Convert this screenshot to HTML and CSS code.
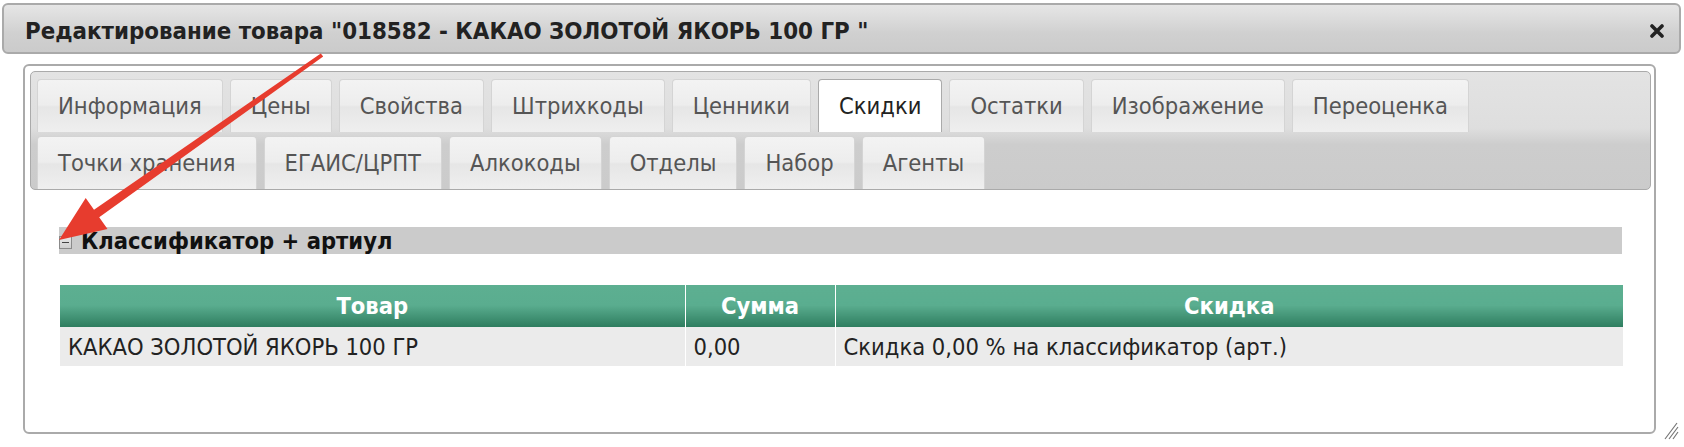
FILE: index.html
```html
<!DOCTYPE html>
<html lang="ru">
<head>
    <meta charset="UTF-8">
    <title>Редактирование товара</title>
    <link rel="stylesheet" href="styles.css">
</head>
<body>
    <div class="dialog">
        <div class="titlebar">
            <span class="title">Редактирование товара "018582 - КАКАО ЗОЛОТОЙ ЯКОРЬ 100 ГР "</span>
            <svg class="close" width="14" height="14" viewBox="0 0 14 14">
                <path d="M2 2 L12 12 M12 2 L2 12" stroke="#222" stroke-width="3.6" stroke-linecap="round"/>
            </svg>
        </div>

        <div class="content">
            <div class="tabs">
                <div class="tab">Информация</div>
                <div class="tab">Цены</div>
                <div class="tab">Свойства</div>
                <div class="tab">Штрихкоды</div>
                <div class="tab">Ценники</div>
                <div class="tab active">Скидки</div>
                <div class="tab">Остатки</div>
                <div class="tab">Изображение</div>
                <div class="tab">Переоценка</div>
                <div class="tab">Точки хранения</div>
                <div class="tab">ЕГАИС/ЦРПТ</div>
                <div class="tab">Алкокоды</div>
                <div class="tab">Отделы</div>
                <div class="tab">Набор</div>
                <div class="tab">Агенты</div>
            </div>

            <div class="panel">
                <div class="section-head">
                    <span class="toggle"></span>
                    <span>Классификатор + артиул</span>
                </div>

                <table class="grid">
                    <thead>
                        <tr>
                            <th class="col-name">Товар</th>
                            <th class="col-sum">Сумма</th>
                            <th>Скидка</th>
                        </tr>
                    </thead>
                    <tbody>
                        <tr>
                            <td>КАКАО ЗОЛОТОЙ ЯКОРЬ 100 ГР</td>
                            <td>0,00</td>
                            <td>Скидка 0,00 % на классификатор (арт.)</td>
                        </tr>
                    </tbody>
                </table>
            </div>
        </div>
    </div>

    <svg class="resize" width="16" height="20" viewBox="0 0 16 20">
        <path d="M2 19 L14 3 M6 19 L15 7 M10 19 L15 12" stroke="#777" stroke-width="1.2"/>
    </svg>

    <svg class="annotation" width="1684" height="447" viewBox="0 0 1684 447">
        <polygon points="320.8,53.4 94,209.8 85.7,198 59,240 107.5,229 99.2,217.2 323.2,56.6" fill="#e73c2e"/>
    </svg>
</body>
</html>
```

FILE: styles.css
```css
* {
    box-sizing: border-box;
}
body {
    margin: 0;
    background: #fff;
    color: #222;
    font-family: "DejaVu Sans Condensed", "DejaVu Sans", sans-serif;
    font-stretch: condensed;
    position: relative;
    width: 1684px;
    height: 447px;
    overflow: hidden;
}
.dialog {
    padding: 3px 3px 0 2px;
}
.titlebar {
    height: 51px;
    border: 2px solid #aaa;
    border-radius: 6px;
    background: linear-gradient(#e6e6e6, #d0d0d0 60%, #cbcbcb);
    display: flex;
    align-items: center;
    justify-content: space-between;
    padding: 5px 15px 0 21px;
}
.title {
    font-weight: bold;
    font-size: 23.8px;
    color: #222;
}
.content {
    margin: 10px 25px 0 21px;
    height: 370px;
    border: 2px solid #aaa;
    border-radius: 6px;
    padding: 5px 3px 0 5px;
}
.tabs {
    display: flex;
    flex-wrap: wrap;
    gap: 4px 7px;
    padding: 7px 6px 0 6px;
    border: 1px solid #aaa;
    border-radius: 5px;
    background: linear-gradient(#e3e3e3, #dedede 48%, #cdcdcd 62%, #cbcbcb);
}
.tab {
    height: 53px;
    padding: 0 20px;
    display: flex;
    align-items: center;
    font-size: 23.5px;
    color: #555;
    border: 1px solid #d4d4d4;
    border-bottom: none;
    border-radius: 4px 4px 0 0;
    background: linear-gradient(#f3f3f3, #ededed 48%, #e6e6e6 52%, #efefef);
}
.tab.active {
    background: #fff;
    border-color: #aaa;
    color: #222;
}
.panel {
    padding: 37px 29px 0 29px;
}
.section-head {
    height: 27px;
    background: #cbcbcb;
    display: flex;
    align-items: center;
    gap: 9px;
    font-weight: bold;
    font-size: 23.5px;
    color: #111;
}
.toggle {
    width: 13px;
    height: 13px;
    margin-top: 3px;
    border: 1px solid #8a8a8a;
    background: linear-gradient(#e8e8e8, #cfcfcf);
    position: relative;
}
.toggle::after {
    content: "";
    position: absolute;
    left: 2px;
    right: 2px;
    top: 5px;
    height: 1px;
    background: #444;
}
.grid {
    width: 1563px;
    margin: 31px 0 0 1px;
    border-collapse: collapse;
    font-size: 23.5px;
}
.grid th {
    height: 42px;
    color: #fff;
    font-weight: bold;
    background: linear-gradient(#5daf91, #5aad8f 48%, #2e7d5f);
    border-left: 1px solid #fff;
}
.grid th:first-child,
.grid td:first-child {
    border-left: none;
}
.col-name {
    width: 625px;
}
.col-sum {
    width: 150px;
}
.grid td {
    height: 39px;
    padding: 0 8px;
    background: #ebebeb;
    color: #222;
    border-left: 1px solid #fff;
}
.resize {
    position: absolute;
    right: 5px;
    bottom: 7px;
}
.annotation {
    position: absolute;
    left: 0;
    top: 0;
    pointer-events: none;
}
```
